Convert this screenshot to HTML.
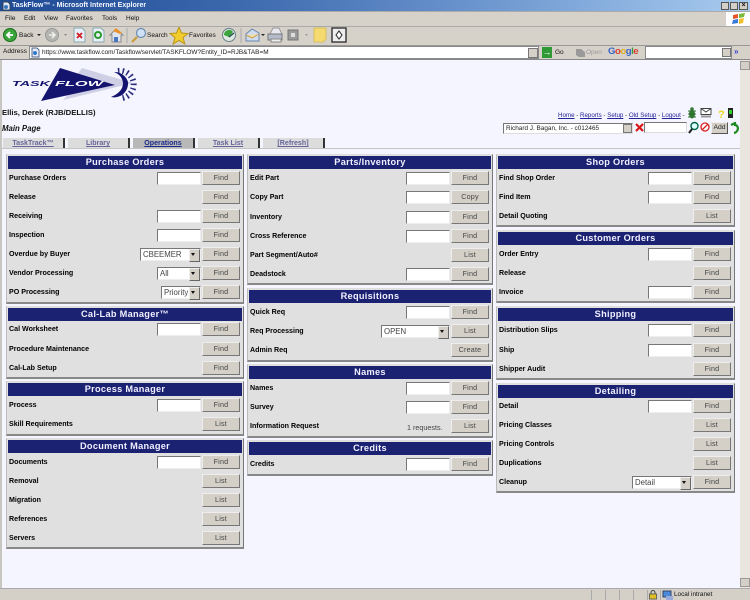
<!DOCTYPE html>
<html><head><meta charset="utf-8"><title>TaskFlow</title>
<style>
html,body{margin:0;padding:0;width:750px;height:600px;overflow:hidden;background:#f5f5ff}
body{position:relative;font-family:"Liberation Sans",sans-serif;color:#111;font-size:8px;filter:blur(.3px)}
div,span,a,svg{position:absolute;white-space:nowrap;box-sizing:border-box}
a{color:#22229a;text-decoration:underline;position:static}
.col{top:0;height:0}
.p{left:0;right:0;background:#e0e0e0;border:1px solid #ddd;border-right:1px solid #777;border-bottom:2px solid #888;border-left:1px solid #bbb}
.h{left:2px;right:2px;height:13px;background:#1b2272;color:#f0f0ff;font-weight:bold;font-size:9.2px;letter-spacing:.3px;text-align:center;line-height:13px}
.r{left:0;right:0;height:14px}
.l{left:3px;top:2px;font-weight:bold;font-size:7.1px;line-height:11px;color:#000}
.b{right:4px;top:0;width:38px;height:14px;background:#d4d0c8;border:1px solid;border-color:#eee #777 #777 #eee;color:#444;font-size:7.2px;letter-spacing:.2px;text-align:center;line-height:11px}
.i{right:43px;top:1px;width:44px;height:13px;background:#fff;border:1px solid;border-color:#777 #eee #eee #777}
.s{right:43px;top:1px;height:13px;background:#fff;border:1px solid;border-color:#777 #eee #eee #777;font-size:7.8px;line-height:12px;padding-left:2px;color:#444}
.s i{position:absolute;right:0;top:0;width:9px;height:11px;background:#d4d0c8;border:1px solid #888;border-color:#eee #666 #666 #eee}
.s i:after{content:"";position:absolute;left:1px;top:3px;border:2px solid transparent;border-top:3px solid #111}
.tab{top:138px;height:10px;background:#dcdcdc;border-right:2px solid #333;color:#66669a;font-weight:bold;font-size:7.1px;text-align:center;line-height:10px;text-decoration:underline}
.m{top:14px;font-size:6.5px;color:#111;line-height:10px}
.sb{top:590px;height:10px;width:1px;background:#aaa}
</style></head><body>

<!-- title bar -->
<div style="left:0;top:0;width:750px;height:11px;background:linear-gradient(90deg,#1f4a94 0,#3a66ac 30%,#6d97cf 65%,#a8cbef 100%)"></div>
<svg style="left:2px;top:1px" width="9" height="10"><path d="M1 1h5l2 2v6H1z" fill="#dfe8f8" stroke="#345"/><circle cx="4" cy="6" r="2" fill="#37b"/></svg>
<div style="left:12px;top:0;height:11px;line-height:11px;color:#f2f6ff;font-weight:bold;font-size:7px">TaskFlow™ - Microsoft Internet Explorer</div>
<div style="left:721px;top:2px;width:8px;height:8px;background:#d4d0c8;border:1px solid #555"></div>
<div style="left:730px;top:2px;width:8px;height:8px;background:#d4d0c8;border:1px solid #555"></div>
<div style="left:739px;top:2px;width:9px;height:8px;background:#d4d0c8;border:1px solid #555;font-size:7px;line-height:6px;text-align:center;font-weight:bold">×</div>

<!-- chrome background -->
<div style="left:0;top:11px;width:750px;height:49px;background:#d6d2ca"></div>
<div style="left:0;top:11px;width:750px;height:1px;background:#aaa"></div>
<div style="left:0;top:26px;width:750px;height:1px;background:#aaa"></div>
<div style="left:0;top:45px;width:750px;height:1px;background:#999"></div>
<div style="left:0;top:59px;width:750px;height:1px;background:#888"></div>

<!-- menu -->
<div class="m" style="left:5px">File</div>
<div class="m" style="left:24px">Edit</div>
<div class="m" style="left:44px">View</div>
<div class="m" style="left:66px">Favorites</div>
<div class="m" style="left:102px">Tools</div>
<div class="m" style="left:126px">Help</div>
<div style="left:726px;top:12px;width:24px;height:14px;background:#fff"></div>
<svg style="left:732px;top:13px" width="14" height="12"><path d="M1 2l5-1v4l-5 1z" fill="#e8552a"/><path d="M7 1l6-1-1 4-5 1z" fill="#7cb83a"/><path d="M1 7l5-1v4l-6 1z" fill="#3a7ad8"/><path d="M7 6l5-1-1 5-4 1z" fill="#f2c02a"/></svg>

<!-- toolbar -->
<svg style="left:0;top:27px" width="350" height="18">
<circle cx="10" cy="8" r="6.5" fill="#3aa53a" stroke="#1d6d1d"/><path d="M13 8H7m3-3L7 8l3 3" stroke="#fff" stroke-width="1.8" fill="none"/>
<path d="M37 7l4 0-2 2z" fill="#222"/>
<circle cx="52" cy="8" r="6.5" fill="#b4b4b0" stroke="#999"/><path d="M49 8h6m-3-3l3 3-3 3" stroke="#eee" stroke-width="1.6" fill="none"/>
<path d="M64 7l3 0-1.500 2z" fill="#888"/>
<path d="M74 1h8l3 3v11H74z" fill="#e8eefa" stroke="#8aa"/><path d="M77 6l5 5m0-5l-5 5" stroke="#d02020" stroke-width="1.8"/>
<path d="M93 1h8l3 3v11H93z" fill="#e8eefa" stroke="#8aa"/><circle cx="98" cy="8" r="3" fill="none" stroke="#2a9a2a" stroke-width="2"/>
<path d="M110 8l6-6 7 6h-2v7h-9V8z" fill="#dfe4ee" stroke="#888"/><path d="M113 4l3-3 6 5-2 1z" fill="#e9922a"/><rect x="114" y="10" width="4" height="5" fill="#4a78c0"/>
<line x1="127" y1="1" x2="127" y2="16" stroke="#aaa"/>
<circle cx="141" cy="6" r="4.500" fill="#cfe2f5" stroke="#6a8cb0" stroke-width="1.200"/><path d="M137 10l-5 5" stroke="#c99a3a" stroke-width="2.200"/>
<path d="M179 0l2.500 6 6.500 .5-5 4 1.800 6.500-5.800-3.500-5.800 3.500 1.800-6.500-5-4 6.500-.5z" fill="#f2cc2a" stroke="#b8941a"/>
<circle cx="229" cy="8" r="6.500" fill="#dfe8e0" stroke="#6a7f8a"/><path d="M224 8a5 5 0 0 1 9-3l-4 5z" fill="#3aa53a"/><path d="M229 10l5-4" stroke="#245" stroke-width="1.200"/>
<line x1="241" y1="1" x2="241" y2="16" stroke="#aaa"/>
<path d="M246 7l6-5 7 4v8h-13z" fill="#cfdcf0" stroke="#6a86ae"/><path d="M246 8l6 3 7-4" fill="#f2dfa8" stroke="#c8a050"/>
<path d="M261 7l4 0-2 2z" fill="#222"/>
<path d="M270 7l3-6h6l3 6z" fill="#e8e8f0" stroke="#999"/><rect x="268" y="7" width="14" height="6" fill="#b4bccc" stroke="#777"/><rect x="271" y="12" width="10" height="3" fill="#eee" stroke="#888"/>
<rect x="288" y="3" width="10" height="10" fill="#9a9a9a" stroke="#777"/><rect x="291" y="6" width="4" height="4" fill="#ddd"/>
<path d="M305 7l3 0-1.500 2z" fill="#999"/>
<path d="M314 1h12v11l-3 3h-9z" fill="#f5da70" stroke="#d8c060"/>
<rect x="332" y="1" width="14" height="14" fill="#eee" stroke="#333" stroke-width="1.400"/><path d="M339 4l-3 4 3 4 3-4z" fill="#fff" stroke="#222"/>
</svg>
<div style="left:19px;top:30px;font-size:6.5px;line-height:11px;color:#111">Back</div>
<div style="left:147px;top:30px;font-size:6.5px;line-height:11px;color:#111">Search</div>
<div style="left:189px;top:30px;font-size:6.5px;line-height:11px;color:#111">Favorites</div>

<!-- address -->
<div style="left:3px;top:47px;font-size:6.5px;line-height:10px;color:#111">Address</div>
<div style="left:29px;top:46px;width:510px;height:13px;background:#fff;border:1px solid #888"></div>
<svg style="left:31px;top:47px" width="9" height="11"><path d="M1 1h5l2 2v7H1z" fill="#e4ecfa" stroke="#568"/><circle cx="4" cy="6" r="2" fill="#37c"/></svg>
<div style="left:42px;top:47px;font-size:6.45px;line-height:11px;color:#222">https://www.taskflow.com/Taskflow/servlet/TASKFLOW?Entity_ID=RJB&amp;TAB=M</div>
<div style="left:528px;top:48px;width:10px;height:10px;background:#d4d0c8;border:1px solid #777"></div>
<div style="left:542px;top:47px;width:10px;height:11px;background:#2f9a35;color:#fff;font-size:9px;line-height:10px;text-align:center;font-weight:bold">→</div>
<div style="left:555px;top:48px;font-size:6.5px;line-height:10px">Go</div>
<svg style="left:575px;top:47px" width="11" height="11"><path d="M1 2h5l4 3v5H4L1 8z" fill="#999"/></svg>
<div style="left:586px;top:48px;font-size:6.5px;line-height:10px;color:#999">Open</div>
<div style="left:608px;top:46px;font-size:9.6px;line-height:12px;font-weight:bold;letter-spacing:-.5px"><span style="position:static;color:#3a62c8">G</span><span style="position:static;color:#d84030">o</span><span style="position:static;color:#e0b020">o</span><span style="position:static;color:#3a62c8">g</span><span style="position:static;color:#3a9a3a">l</span><span style="position:static;color:#d84030">e</span></div>
<div style="left:645px;top:46px;width:87px;height:13px;background:#fff;border:1px solid #888"></div>
<div style="left:722px;top:48px;width:9px;height:9px;background:#d4d0c8;border:1px solid #777"></div>
<div style="left:734px;top:47px;font-size:8px;line-height:10px;color:#3a3ad0;font-weight:bold">»</div>

<!-- scrollbar + status -->
<div style="left:740px;top:60px;width:10px;height:528px;background:#e8e6df"></div>
<div style="left:740px;top:61px;width:10px;height:9px;background:#d4d0c8;border:1px solid #999"></div>
<div style="left:740px;top:578px;width:10px;height:9px;background:#d4d0c8;border:1px solid #999"></div>
<div style="left:0;top:60px;width:2px;height:528px;background:#c8c6c0"></div>
<div style="left:0;top:588px;width:750px;height:12px;background:#d4d0c8;border-top:1px solid #aaa"></div>
<div class="sb" style="left:591px"></div><div class="sb" style="left:605px"></div><div class="sb" style="left:619px"></div><div class="sb" style="left:633px"></div><div class="sb" style="left:647px"></div><div class="sb" style="left:660px"></div>
<svg style="left:648px;top:590px" width="26" height="10"><rect x="1.500" y="4" width="7" height="5" fill="#e0c020" stroke="#665"/><path d="M3 4V2.500a2 2 0 0 1 4 0V4" fill="none" stroke="#444"/><rect x="15" y="1" width="8" height="6" fill="#4a8ad8" stroke="#346"/><rect x="18" y="6" width="7" height="4" fill="#9ad"/></svg>
<div style="left:674px;top:589px;font-size:6.4px;line-height:11px;color:#111">Local intranet</div>

<!-- logo -->
<svg style="left:8px;top:64px" width="130" height="42">
<path d="M74 4l51 15-70 17 12-13-3-5z" fill="#cfcfe6"/>
<path d="M52 4l55 17-74 16z" fill="#14146e"/>
<path d="M106 8a14 14 0 0 1 14 10a14 14 0 0 1 -17 15q12-5 12-14q-1-8-9-11z" fill="#14146e"/>
<path d="M108 7a13 13 0 0 1 4 27" fill="none" stroke="#14146e" stroke-width="6" stroke-dasharray="1.500 3" transform="translate(2 0)" opacity=".9"/>
<text x="4" y="22" font-family="Liberation Sans" font-size="7" font-style="italic" font-weight="bold" fill="#14146e" textLength="38" lengthAdjust="spacingAndGlyphs">TASK</text>
<text x="47" y="22" font-family="Liberation Sans" font-size="7" font-style="italic" font-weight="bold" fill="#fff" textLength="48" lengthAdjust="spacingAndGlyphs">FLOW</text>
</svg>

<div style="left:2px;top:107px;font-size:7.7px;font-weight:bold;line-height:11px;color:#111">Ellis, Derek (RJB/DELLIS)</div>
<div style="left:2px;top:123px;font-size:7.8px;font-weight:bold;font-style:italic;line-height:11px;color:#111">Main Page</div>

<!-- tabs -->
<div class="tab" style="left:3px;width:62px">TaskTrack™</div>
<div class="tab" style="left:68px;width:62px">Library</div>
<div class="tab" style="left:133px;width:62px;background:#b8b8b8;color:#1b2a8a">Operations</div>
<div class="tab" style="left:198px;width:62px">Task List</div>
<div class="tab" style="left:263px;width:62px">[Refresh]</div>
<div style="left:2px;top:148px;width:738px;height:1px;background:#c4c4c4"></div>

<!-- top right -->
<div style="left:558px;top:111px;font-size:6.2px;line-height:10px;color:#333"><a>Home</a> - <a>Reports</a> - <a>Setup</a> - <a>Old Setup</a> - <a>Logout</a> -</div>
<svg style="left:685px;top:106px" width="50" height="14">
<ellipse cx="7" cy="8" rx="3" ry="4.500" fill="#2f7a2f"/><circle cx="7" cy="3" r="1.800" fill="#2f7a2f"/><path d="M3 5l8 0M3 8l8 0M3 11l8 0" stroke="#2f6a2f"/>
<rect x="16" y="2.500" width="10" height="6" fill="#fff" stroke="#444"/><path d="M16 2.500l5 3.500 5-3.500" fill="none" stroke="#444"/><rect x="16" y="9.500" width="10" height="2" fill="#999"/>
<text x="33" y="12" font-family="Liberation Sans" font-size="11" font-weight="bold" fill="#e8d820">?</text>
<rect x="43" y="2" width="5" height="10" fill="#222"/><rect x="44" y="4" width="3" height="4" fill="#30d030"/>
</svg>
<div style="left:503px;top:123px;width:130px;height:11px;background:#fff;border:1px solid;border-color:#777 #ddd #ddd #777;font-size:6.4px;line-height:9px;padding-left:2px;color:#222">Richard J. Bagan, Inc. - c012465</div>
<div style="left:623px;top:124px;width:9px;height:9px;background:#d4d0c8;border:1px solid #777"></div>
<svg style="left:634px;top:122px" width="11" height="11"><path d="M2 2l7 7m0-7l-7 7" stroke="#d81818" stroke-width="2.200"/></svg>
<div style="left:644px;top:122px;width:43px;height:11px;background:#fff;border:1px solid;border-color:#777 #ddd #ddd #777"></div>
<svg style="left:688px;top:121px" width="24" height="13"><circle cx="6.500" cy="5" r="3.500" fill="#dff" stroke="#064" stroke-width="1.400"/><path d="M4 8l-3 4" stroke="#222" stroke-width="2"/><circle cx="17" cy="6" r="4" fill="#fff" stroke="#d82020" stroke-width="1.300"/><path d="M14 9l6-6" stroke="#d82020" stroke-width="1.300"/></svg>
<div style="left:711px;top:122px;width:17px;height:12px;background:#d4d0c8;border:1px solid;border-color:#eee #555 #555 #eee;font-size:6.8px;line-height:10px;text-align:center;color:#222">Add</div>
<svg style="left:729px;top:122px" width="11" height="13"><path d="M2 3l4-2v2c4 0 4 7-1 8" fill="none" stroke="#1d8a1d" stroke-width="2.200"/></svg>

<!-- column 1 -->
<div class="col" style="left:6px;width:238px">
<div class="p" style="top:154px;height:150px"></div>
<div class="h" style="top:156px">Purchase Orders</div>
<div class="r" style="top:171px"><div class="l">Purchase Orders</div><div class="i"></div><div class="b">Find</div></div>
<div class="r" style="top:190px"><div class="l">Release</div><div class="b">Find</div></div>
<div class="r" style="top:209px"><div class="l">Receiving</div><div class="i"></div><div class="b">Find</div></div>
<div class="r" style="top:228px"><div class="l">Inspection</div><div class="i"></div><div class="b">Find</div></div>
<div class="r" style="top:247px"><div class="l">Overdue by Buyer</div><div class="s" style="width:61px">CBEEMER<i></i></div><div class="b">Find</div></div>
<div class="r" style="top:266px"><div class="l">Vendor Processing</div><div class="s" style="width:44px">All<i></i></div><div class="b">Find</div></div>
<div class="r" style="top:285px"><div class="l">PO Processing</div><div class="s" style="width:40px">Priority<i></i></div><div class="b">Find</div></div>

<div class="p" style="top:306px;height:73px"></div>
<div class="h" style="top:308px">Cal-Lab Manager™</div>
<div class="r" style="top:322px"><div class="l">Cal Worksheet</div><div class="i"></div><div class="b">Find</div></div>
<div class="r" style="top:342px"><div class="l">Procedure Maintenance</div><div class="b">Find</div></div>
<div class="r" style="top:361px"><div class="l">Cal-Lab Setup</div><div class="b">Find</div></div>

<div class="p" style="top:381px;height:55px"></div>
<div class="h" style="top:383px">Process Manager</div>
<div class="r" style="top:398px"><div class="l">Process</div><div class="i"></div><div class="b">Find</div></div>
<div class="r" style="top:417px"><div class="l">Skill Requirements</div><div class="b">List</div></div>

<div class="p" style="top:438px;height:111px"></div>
<div class="h" style="top:440px">Document Manager</div>
<div class="r" style="top:455px"><div class="l">Documents</div><div class="i"></div><div class="b">Find</div></div>
<div class="r" style="top:474px"><div class="l">Removal</div><div class="b">List</div></div>
<div class="r" style="top:493px"><div class="l">Migration</div><div class="b">List</div></div>
<div class="r" style="top:512px"><div class="l">References</div><div class="b">List</div></div>
<div class="r" style="top:531px"><div class="l">Servers</div><div class="b">List</div></div>
</div>

<!-- column 2 -->
<div class="col" style="left:247px;width:246px">
<div class="p" style="top:154px;height:131px"></div>
<div class="h" style="top:156px">Parts/Inventory</div>
<div class="r" style="top:171px"><div class="l">Edit Part</div><div class="i"></div><div class="b">Find</div></div>
<div class="r" style="top:190px"><div class="l">Copy Part</div><div class="i"></div><div class="b">Copy</div></div>
<div class="r" style="top:210px"><div class="l">Inventory</div><div class="i"></div><div class="b">Find</div></div>
<div class="r" style="top:229px"><div class="l">Cross Reference</div><div class="i"></div><div class="b">Find</div></div>
<div class="r" style="top:248px"><div class="l">Part Segment/Auto#</div><div class="b">List</div></div>
<div class="r" style="top:267px"><div class="l">Deadstock</div><div class="i"></div><div class="b">Find</div></div>

<div class="p" style="top:288px;height:74px"></div>
<div class="h" style="top:290px">Requisitions</div>
<div class="r" style="top:305px"><div class="l">Quick Req</div><div class="i"></div><div class="b">Find</div></div>
<div class="r" style="top:324px"><div class="l">Req Processing</div><div class="s" style="width:69px">OPEN<i></i></div><div class="b">List</div></div>
<div class="r" style="top:343px"><div class="l">Admin Req</div><div class="b">Create</div></div>

<div class="p" style="top:364px;height:74px"></div>
<div class="h" style="top:366px">Names</div>
<div class="r" style="top:381px"><div class="l">Names</div><div class="i"></div><div class="b">Find</div></div>
<div class="r" style="top:400px"><div class="l">Survey</div><div class="i"></div><div class="b">Find</div></div>
<div class="r" style="top:419px"><div class="l">Information Request</div><div style="left:160px;top:3px;font-size:7.2px;line-height:11px;color:#444">1 requests.</div><div class="b">List</div></div>

<div class="p" style="top:440px;height:36px"></div>
<div class="h" style="top:442px">Credits</div>
<div class="r" style="top:457px"><div class="l">Credits</div><div class="i"></div><div class="b">Find</div></div>
</div>

<!-- column 3 -->
<div class="col" style="left:496px;width:239px">
<div class="p" style="top:154px;height:73px"></div>
<div class="h" style="top:156px">Shop Orders</div>
<div class="r" style="top:171px"><div class="l">Find Shop Order</div><div class="i"></div><div class="b">Find</div></div>
<div class="r" style="top:190px"><div class="l">Find Item</div><div class="i"></div><div class="b">Find</div></div>
<div class="r" style="top:209px"><div class="l">Detail Quoting</div><div class="b">List</div></div>

<div class="p" style="top:230px;height:73px"></div>
<div class="h" style="top:232px">Customer Orders</div>
<div class="r" style="top:247px"><div class="l">Order Entry</div><div class="i"></div><div class="b">Find</div></div>
<div class="r" style="top:266px"><div class="l">Release</div><div class="b">Find</div></div>
<div class="r" style="top:285px"><div class="l">Invoice</div><div class="i"></div><div class="b">Find</div></div>

<div class="p" style="top:306px;height:74px"></div>
<div class="h" style="top:308px">Shipping</div>
<div class="r" style="top:323px"><div class="l">Distribution Slips</div><div class="i"></div><div class="b">Find</div></div>
<div class="r" style="top:343px"><div class="l">Ship</div><div class="i"></div><div class="b">Find</div></div>
<div class="r" style="top:362px"><div class="l">Shipper Audit</div><div class="b">Find</div></div>

<div class="p" style="top:383px;height:110px"></div>
<div class="h" style="top:385px">Detailing</div>
<div class="r" style="top:399px"><div class="l">Detail</div><div class="i"></div><div class="b">Find</div></div>
<div class="r" style="top:418px"><div class="l">Pricing Classes</div><div class="b">List</div></div>
<div class="r" style="top:437px"><div class="l">Pricing Controls</div><div class="b">List</div></div>
<div class="r" style="top:456px"><div class="l">Duplications</div><div class="b">List</div></div>
<div class="r" style="top:475px"><div class="l">Cleanup</div><div class="s" style="width:60px">Detail<i></i></div><div class="b">Find</div></div>
</div>
</body></html>
